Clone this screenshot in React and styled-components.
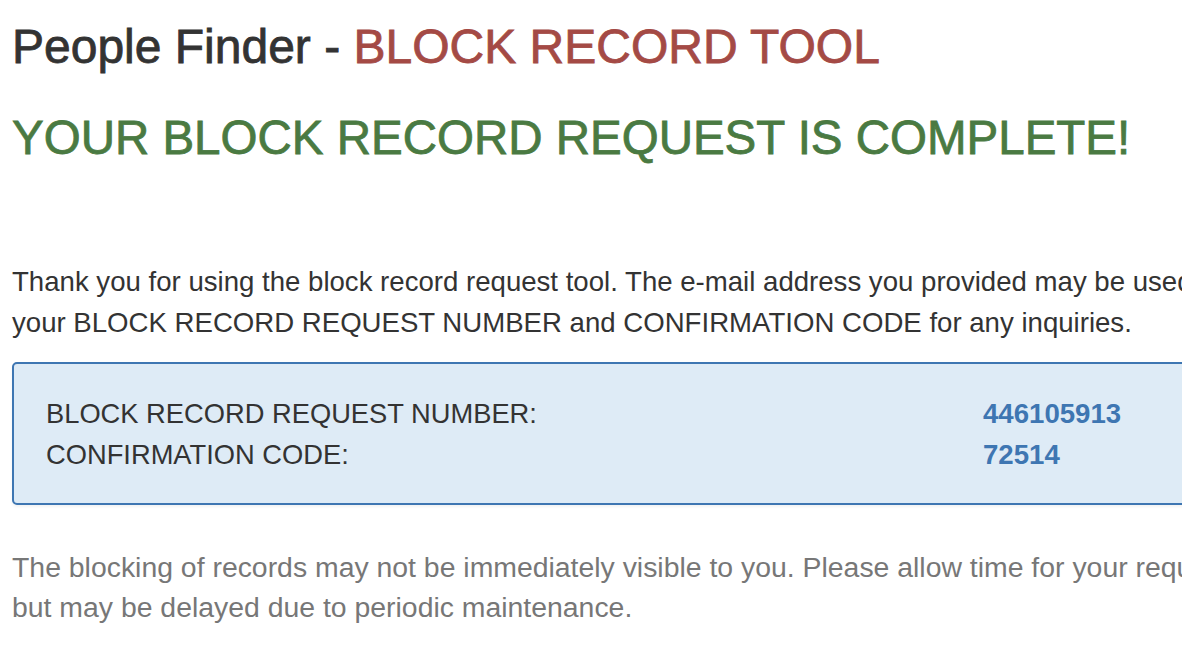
import React from "react";
import styled, { createGlobalStyle } from "styled-components";

const dark = "#333333";
const red = "#a44a45";
const green = "#4a7a42";
const blue = "#3e76b2";
const paleBlue = "#deebf6";
const muted = "#777777";

const GlobalStyle = createGlobalStyle`
  html, body {
    margin: 0;
    padding: 0;
    background: #ffffff;
    overflow: hidden;
  }
  body {
    font-family: "Liberation Sans", Arial, Helvetica, sans-serif;
    color: ${dark};
  }
`;

const Page = styled.div`
  width: 1700px;
  padding: 20px 0 40px 12px;
`;

// headings are a medium weight in the original; thicken the regular face a little
const Title = styled.h1`
  margin: 0;
  font-size: 48px;
  font-weight: 400;
  line-height: 53px;
  color: ${dark};
  white-space: nowrap;
  -webkit-text-stroke: 0.8px currentColor;
`;

const Accent = styled.span`
  color: ${red};
`;

const Complete = styled.h2`
  margin: 39px 0 0;
  font-size: 47.5px;
  font-weight: 400;
  line-height: 52px;
  color: ${green};
  white-space: nowrap;
  -webkit-text-stroke: 0.8px currentColor;
`;

const Text = styled.p`
  margin: ${(p) => p.$top}px 0 0;
  font-size: ${(p) => p.$size}px;
  line-height: ${(p) => p.$lh}px;
  color: ${(p) => (p.$muted ? muted : dark)};
  white-space: nowrap;
`;

const InfoBox = styled.div`
  margin-top: 19px;
  background: ${paleBlue};
  border: 2px solid ${blue};
  border-radius: 5px;
  box-shadow: 0 2px 3px rgba(0, 0, 0, 0.05);
  padding: 29px 0 28px 32px;
  display: grid;
  grid-template-columns: 937px auto;
  font-size: 27.3px;
  line-height: 41px;
`;

const Label = styled.div`
  color: ${dark};
  white-space: nowrap;
`;

const Value = styled.div`
  color: ${blue};
  font-weight: 700;
  font-size: 27.6px;
`;

export default function App() {
  return (
    <>
      <GlobalStyle />
      <Page>
        <Title>
          People Finder - <Accent>BLOCK RECORD TOOL</Accent>
        </Title>
        <Complete>YOUR BLOCK RECORD REQUEST IS COMPLETE!</Complete>
        <Text $top={97} $lh={41} $size={27.6}>
          Thank you for using the block record request tool. The e-mail address you provided may be used to contact you about this request. Please keep
          <br />
          your BLOCK RECORD REQUEST NUMBER and CONFIRMATION CODE for any inquiries.
        </Text>
        <InfoBox>
          <Label>BLOCK RECORD REQUEST NUMBER:</Label>
          <Value>446105913</Value>
          <Label>CONFIRMATION CODE:</Label>
          <Value>72514</Value>
        </InfoBox>
        <Text $top={42} $lh={40} $size={28.4} $muted>
          The blocking of records may not be immediately visible to you. Please allow time for your request to be processed, which is usually quick,
          <br />
          but may be delayed due to periodic maintenance.
        </Text>
      </Page>
    </>
  );
}
